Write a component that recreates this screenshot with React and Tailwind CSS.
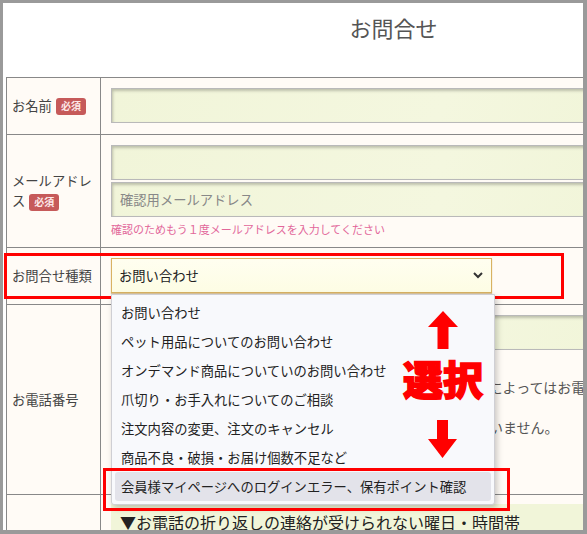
import React from "react";

const inputClass =
  "h-[35px] w-full border border-[#b9b9b9] bg-[linear-gradient(110deg,#f1f5d9,#f4f7df_50%,#eef3d3)] shadow-[inset_1px_2px_3px_rgba(0,0,0,0.22)]";

const labelClass =
  "flex w-[94px] shrink-0 items-center border-r border-[#888] pl-[5px] text-[13.3px] leading-[20px] text-[#444]";

const cellClass = "flex-1 border-r border-[#888] px-[10px]";

const options = [
  "お問い合わせ",
  "ペット用品についてのお問い合わせ",
  "オンデマンド商品についていのお問い合わせ",
  "爪切り・お手入れについてのご相談",
  "注文内容の変更、注文のキャンセル",
  "商品不良・破損・お届け個数不足など",
  "会員様マイページへのログインエラー、保有ポイント確認",
];

function Badge() {
  return (
    <span className="ml-[4px] inline-flex h-[17px] w-[30px] items-center justify-center rounded-[3px] bg-[#c65a5a] text-[10px] font-bold leading-none text-[#fde8e8]">
      必須
    </span>
  );
}

function Dropdown() {
  return (
    <div className="absolute left-0 top-[36px] z-10 w-[384px] rounded-b-[3px] border border-[#cfcfd4] bg-[#f8f9fc] py-[3px] shadow-[2px_3px_6px_rgba(0,0,0,0.22)]">
      {options.map((o, i) => (
        <div
          key={o}
          className={
            i === options.length - 1
              ? "mx-[3px] flex h-[29px] items-center rounded-[3px] bg-[#e3e3ea] px-[6px] text-[13.3px] text-[#222]"
              : "mx-[3px] flex h-[29px] items-center px-[6px] text-[13.3px] text-[#222]"
          }
        >
          {o}
        </div>
      ))}
    </div>
  );
}

export default function App() {
  return (
    <div className="h-[534px] w-[587px] overflow-hidden border-b-4 border-l-[3px] border-r-4 border-t-[3px] border-[#9a9a9a] bg-white font-['Noto_Sans_CJK_JP',sans-serif]">
      <div className="relative w-[781px]">
        <h1 className="h-[74px] pt-[8px] text-center text-[22px] font-normal leading-[33px] text-[#555]">
          お問合せ
        </h1>

        <div className="ml-[3px] border-l border-t border-[#888] bg-[#fffbf6]">
          {/* お名前 */}
          <div className="flex border-b border-[#888]">
            <div className={labelClass}>
              お名前
              <Badge />
            </div>
            <div className={`${cellClass} pb-[11px] pt-[10px]`}>
              <div className={inputClass} />
            </div>
          </div>

          {/* メールアドレス */}
          <div className="flex border-b border-[#888]">
            <div className={labelClass}>
              <div className="w-[88px]">
                メールアドレス
                <Badge />
              </div>
            </div>
            <div className={`${cellClass} pb-[10px] pt-[10px]`}>
              <div className={inputClass} />
              <div className={`${inputClass} mt-[2px] flex items-center pl-[8px] text-[13.3px] text-[#888]`}>
                確認用メールアドレス
              </div>
              <p className="mt-[4px] text-[11px] leading-[16px] text-[#e2679a]">
                確認のためもう１度メールアドレスを入力してください
              </p>
            </div>
          </div>

          {/* お問合せ種類 */}
          <div className="flex border-b border-[#888]">
            <div className={labelClass}>お問合せ種類</div>
            <div className={`${cellClass} pb-[11px] pt-[10px]`}>
              <div className="relative w-[381px]">
                <div className="flex h-[35px] items-center justify-between border border-[#d9b262] bg-[linear-gradient(180deg,#fffef0,#fdfde4)] pl-[7px] pr-[8px] text-[13.3px] text-[#222] shadow-[0_1px_1px_rgba(180,140,60,0.5)]">
                  お問い合わせ
                  <svg width="10" height="7" viewBox="0 0 10 7">
                    <polyline points="1,1 5,5 9,1" fill="none" stroke="#333" strokeWidth="2" />
                  </svg>
                </div>
                <Dropdown />
              </div>
            </div>
          </div>

          {/* お電話番号 */}
          <div className="flex border-b border-[#888]">
            <div className={labelClass}>お電話番号</div>
            <div className={`${cellClass} pb-[57px] pt-[10px]`}>
              <div className={inputClass} />
              <p className="mt-[27px] whitespace-nowrap text-[14px] leading-[20px] text-[#555]">
                お電話番号をご入力いただいた場合でも、お問い合わせ内容によってはお電話でのご連絡となります。
              </p>
              <p className="mt-[20px] whitespace-nowrap text-[14px] leading-[20px] text-[#555]">
                お電話でのご連絡を希望されない場合は、空欄でも問題ございません。
              </p>
            </div>
          </div>

          {/* 折り返し */}
          <div className="flex">
            <div className="w-[94px] shrink-0 border-r border-[#888]" />
            <div className={`${cellClass} pt-[9px]`}>
              <div className="bg-[#f1f5d9] px-[9px] pt-[6px] text-[16px] leading-[24px] text-[#222]">
                ▼お電話の折り返しの連絡が受けられない曜日・時間帯
              </div>
            </div>
          </div>
        </div>

        {/* annotations */}
        <div className="absolute left-[1px] top-[250px] h-[46px] w-[560px] border-[3px] border-[#ff0000]" />
        <div className="absolute left-[100px] top-[465px] z-20 h-[43px] w-[407px] border-[3px] border-[#ff0000]" />
        <svg className="absolute left-[425px] top-[308px] z-20" width="30" height="38" viewBox="0 0 30 38">
          <polygon points="15,0 30,16 20.5,16 20.5,38 9.5,38 9.5,16 0,16" fill="#ff0000" />
        </svg>
        <div className="absolute left-[400px] top-[355px] z-20 text-[40px] font-black leading-none text-[#ff0000] [-webkit-text-stroke:1.5px_#ff0000]">
          選択
        </div>
        <svg className="absolute left-[425px] top-[417px] z-20" width="29" height="38" viewBox="0 0 29 38">
          <polygon points="9,0 20,0 20,19 29,19 14.5,38 0,19 9,19" fill="#ff0000" />
        </svg>
      </div>
    </div>
  );
}
